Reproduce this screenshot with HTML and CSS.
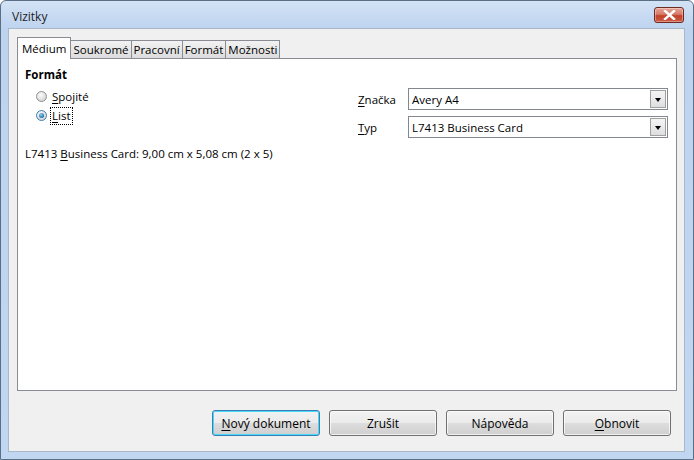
FILE: index.html
```html
<!DOCTYPE html>
<html lang="cs">
<head>
  <meta charset="UTF-8">
  <title>Vizitky</title>
  <link rel="stylesheet" href="styles.css">
</head>
<body>
  <div class="window">
    <div class="titlebar">
      <span class="title">Vizitky</span>
      <button class="close" aria-label="Zavřít">
        <svg width="13" height="10" viewBox="0 0 13 10">
          <path d="M2 1 L11 9 M11 1 L2 9" stroke="#fff" stroke-width="2.4" stroke-linecap="square"/>
        </svg>
      </button>
    </div>
    <div class="client">
      <div class="tabs">
        <div class="tab active">Médium</div>
        <div class="tab">Soukromé</div>
        <div class="tab">Pracovní</div>
        <div class="tab">Formát</div>
        <div class="tab">Možnosti</div>
      </div>
      <div class="panel">
        <div class="columns">
          <div class="left">
            <div class="heading">Formát</div>
            <label class="radio"><span class="dot"></span><span><u>S</u>pojité</span></label>
            <label class="radio checked"><span class="dot"></span><span class="focus"><u>L</u>ist</span></label>
            <div class="info">L7413 <u>B</u>usiness Card: 9,00 cm x 5,08 cm (2 x 5)</div>
          </div>
          <div class="right">
            <div class="row">
              <span class="lbl"><u>Z</u>načka</span>
              <div class="combo"><span>Avery A4</span><span class="arrow"></span></div>
            </div>
            <div class="row">
              <span class="lbl"><u>T</u>yp</span>
              <div class="combo"><span>L7413 Business Card</span><span class="arrow"></span></div>
            </div>
          </div>
        </div>
      </div>
      <div class="buttons">
        <button class="btn default"><u>N</u>ový dokument</button>
        <button class="btn">Zrušit</button>
        <button class="btn">Nápověda</button>
        <button class="btn"><u>O</u>bnovit</button>
      </div>
    </div>
  </div>
</body>
</html>
```

FILE: styles.css
```css
body {
  margin: 0;
  width: 694px;
  height: 460px;
  overflow: hidden;
  font-family: "Open Sans", "Noto Sans", sans-serif;
  font-size: 11.5px;
  color: #000;
  background: #fff;
}
u {
  text-decoration: underline;
  text-underline-offset: 2px;
}
.window {
  width: 694px;
  height: 460px;
  box-sizing: border-box;
  border: 1px solid #5a6f86;
  border-radius: 6px 6px 0 0;
  background: linear-gradient(to bottom, #d3e2f5 0, #bdd3ef 28px, #c1d6f1 100%);
  padding: 0 8px 7px 7px;
  display: flex;
  flex-direction: column;
}
.titlebar {
  height: 27px;
  display: flex;
  align-items: center;
  justify-content: space-between;
  flex-shrink: 0;
}
.title {
  padding-left: 4px;
  margin-top: 4px;
  color: #1e1e1e;
  font-size: 12px;
}
.close {
  width: 30px;
  height: 16px;
  margin-right: 1px;
  border: 1px solid #6b2a22;
  border-radius: 3px;
  background: linear-gradient(to bottom, #e8a497 0, #d67a6a 45%, #c2412b 55%, #cf5c45 100%);
  display: flex;
  align-items: center;
  justify-content: center;
  padding: 0;
  box-shadow: inset 0 0 0 1px rgba(255,255,255,0.35);
}
.client {
  flex: 1;
  background: #f0f0f0;
  border: 1px solid #a9b8c9;
  display: flex;
  flex-direction: column;
  padding: 8px 7px 0 8px;
}
.tabs {
  display: flex;
  align-items: flex-end;
  height: 21px;
  position: relative;
  z-index: 1;
}
.tab {
  height: 18px;
  box-sizing: border-box;
  padding: 0 2px;
  border: 1px solid #898c95;
  border-bottom: none;
  border-left: none;
  background: linear-gradient(to bottom, #f2f2f2, #dcdcdc);
  line-height: 17px;
}
.tab.active {
  height: 22px;
  padding: 2px 4px 0 4px;
  border-left: 1px solid #898c95;
  background: #fff;
  margin-bottom: -1px;
}
.panel {
  height: 333px;
  box-sizing: border-box;
  background: #fff;
  border: 1px solid #898c95;
  padding: 8px 8px 0 7px;
}
.columns {
  display: flex;
}
.left {
  width: 334px;
}
.heading {
  font-weight: bold;
  line-height: 16px;
}
.radio {
  display: flex;
  align-items: center;
  gap: 5px;
  margin-left: 11px;
  line-height: 16px;
  height: 19px;
}
.radio:first-of-type {
  margin-top: 4px;
}
.dot {
  width: 11px;
  height: 11px;
  border-radius: 50%;
  border: 1px solid #8e8f8f;
  background: radial-gradient(circle at 40% 35%, #fdfdfd, #d8d8d8 70%);
  box-sizing: border-box;
  position: relative;
}
.radio.checked .dot {
  border-color: #3c7fb1;
}
.radio.checked .dot::after {
  content: "";
  position: absolute;
  left: 2px;
  top: 2px;
  width: 5px;
  height: 5px;
  border-radius: 50%;
  background: radial-gradient(circle at 40% 35%, #8fd3f7, #0f5f9a 80%);
}
.focus {
  outline: 1px dotted #000;
  padding: 0 1px;
  margin-left: -1px;
}
.info {
  margin-top: 21px;
  line-height: 16px;
}
.right {
  flex: 1;
  padding-top: 21px;
}
.row {
  display: flex;
  align-items: center;
  height: 22px;
  margin-bottom: 6px;
}
.lbl {
  width: 50px;
}
.combo {
  width: 260px;
  height: 22px;
  box-sizing: border-box;
  border: 1px solid #828790;
  background: #fff;
  display: flex;
  align-items: center;
  justify-content: space-between;
  padding-left: 3px;
}
.arrow {
  width: 16px;
  height: 18px;
  margin-right: 1px;
  border: 1px solid #a0a0a0;
  background: linear-gradient(to bottom, #f5f5f5, #dedede);
  box-sizing: border-box;
  position: relative;
}
.arrow::after {
  content: "";
  position: absolute;
  left: 4px;
  top: 7px;
  border-left: 3.5px solid transparent;
  border-right: 3.5px solid transparent;
  border-top: 4px solid #000;
}
.buttons {
  display: flex;
  justify-content: flex-end;
  gap: 9px;
  padding-top: 19px;
  padding-right: 6px;
}
.btn {
  width: 108px;
  height: 26px;
  border: 1px solid #707070;
  border-radius: 3px;
  background: linear-gradient(to bottom, #f2f2f2 0, #ebebeb 50%, #dddddd 51%, #cfcfcf 100%);
  font: inherit;
  font-size: 12px;
  color: #000;
  padding: 0;
  box-shadow: inset 0 0 0 1px rgba(255,255,255,0.7);
}
.btn.default {
  border-color: #3c7fb1;
  box-shadow: inset 0 0 0 1px #48d8fb;
}
```
